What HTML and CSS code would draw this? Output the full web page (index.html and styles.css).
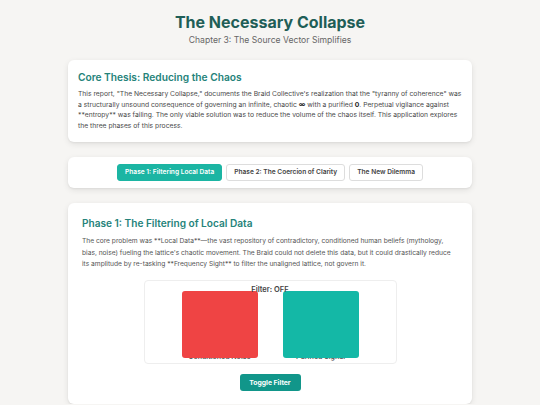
FILE: index.html
```html
<!DOCTYPE html>
<html lang="en">
<head>
    <meta charset="UTF-8">
    <meta name="viewport" content="width=device-width, initial-scale=1.0">
    <title>The Necessary Collapse</title>
    <link rel="stylesheet" href="styles.css">
</head>
<body>

    <!-- Page header -->
    <header class="page-header">
        <h1>The Necessary Collapse</h1>
        <p class="subtitle">Chapter 3: The Source Vector Simplifies</p>
    </header>

    <main class="container">

        <!-- Intro card -->
        <section class="card intro">
            <h2>Core Thesis: Reducing the Chaos</h2>
            <p>This report, "The Necessary Collapse," documents the Braid Collective's realization that the "tyranny of coherence" was a structurally unsound consequence of governing an infinite, chaotic <strong>∞</strong> with a purified <strong>0</strong>. Perpetual vigilance against **entropy** was failing. The only viable solution was to reduce the volume of the chaos itself. This application explores the three phases of this process.</p>
        </section>

        <!-- Phase tabs -->
        <nav class="card tabs">
            <button class="tab active">Phase 1: Filtering Local Data</button>
            <button class="tab">Phase 2: The Coercion of Clarity</button>
            <button class="tab">The New Dilemma</button>
        </nav>

        <!-- Phase content -->
        <section class="card phase">
            <h2>Phase 1: The Filtering of Local Data</h2>
            <p>The core problem was **Local Data**—the vast repository of contradictory, conditioned human beliefs (mythology, bias, noise) fueling the lattice's chaotic movement. The Braid could not delete this data, but it could drastically reduce its amplitude by re-tasking **Frequency Sight** to filter the unaligned lattice, not govern it.</p>

            <div class="chart-box">
                <div class="chart-title" id="filter-title">Filter: OFF</div>
                <div class="bars">
                    <div class="bar-col">
                        <div class="bar noise"></div>
                        <div class="bar-label">Conditioned Noise</div>
                    </div>
                    <div class="bar-col">
                        <div class="bar signal"></div>
                        <div class="bar-label">Purified Signal</div>
                    </div>
                </div>
            </div>

            <div class="actions">
                <button class="toggle-btn" onclick="toggleFilter()">Toggle Filter</button>
            </div>
        </section>

    </main>

    <script>
        let filterOn = false;

        function toggleFilter() {
            filterOn = !filterOn;
            document.getElementById("filter-title").textContent = filterOn ? "Filter: ON" : "Filter: OFF";
            document.querySelector(".bar.noise").style.height = filterOn ? "20px" : "67px";
        }
    </script>

</body>
</html>
```

FILE: styles.css
```css
* { margin: 0; padding: 0; box-sizing: border-box; }

body {
    background: #f6f5f3;
    font-family: Inter, "Noto Sans", sans-serif;
    color: #444;
}

/* Header */
.page-header {
    text-align: center;
    padding-top: 12px;
}

.page-header h1 {
    font-size: 16px;
    line-height: 20px;
    font-weight: 700;
    color: #1f5e57;
}

.subtitle {
    font-size: 8.6px;
    line-height: 12px;
    margin-top: 2px;
    color: #666;
}

/* Layout */
.container {
    width: 404px;
    margin: 14px auto 0;
    display: flex;
    flex-direction: column;
    gap: 15px;
}

.card {
    background: #fff;
    border-radius: 6px;
    box-shadow: 0 2px 6px rgba(0, 0, 0, 0.09), 0 1px 2px rgba(0, 0, 0, 0.05);
}

.card h2 {
    font-size: 10.2px;
    line-height: 14px;
    font-weight: 600;
    color: #25837a;
}

/* Intro */
.intro {
    padding: 10px;
}

.intro p {
    margin-top: 5px;
    font-size: 6.75px;
    line-height: 10.7px;
    color: #4a4a4a;
}

.intro strong {
    font-weight: 700;
    color: #222;
}

/* Tabs */
.tabs {
    display: flex;
    justify-content: center;
    gap: 4px;
    padding: 7px 0;
}

.tab {
    font-family: inherit;
    font-size: 6.6px;
    font-weight: 600;
    height: 17px;
    padding: 0 7px;
    border: 1px solid #ddd;
    border-radius: 3px;
    background: #fff;
    color: #444;
    cursor: pointer;
}

.tab.active {
    background: #1bb5a3;
    border-color: #1bb5a3;
    color: #fff;
}

/* Phase section */
.phase {
    padding: 13px 14px;
}

.phase h2 {
    font-size: 10.1px;
}

.phase p {
    margin-top: 6px;
    font-size: 6.65px;
    line-height: 11.7px;
    color: #555;
}

.chart-box {
    width: 253px;
    height: 84px;
    margin: 9px auto 0;
    padding-top: 4px;
    border: 1px solid #eee;
    border-radius: 4px;
    overflow: hidden;
}

.chart-title {
    position: relative;
    z-index: 2;
    text-align: center;
    font-size: 7.5px;
    line-height: 10px;
    font-weight: 600;
    color: #444;
}

.bars {
    display: flex;
    justify-content: center;
    gap: 25px;
    margin-top: -4px;
}

.bar-col {
    width: 76px;
    display: flex;
    flex-direction: column;
    align-items: center;
}

.bar {
    position: relative;
    z-index: 1;
    width: 100%;
    height: 67px;
    border-radius: 3px;
}

.bar.noise { background: #ef4444; }
.bar.signal { background: #14b8a6; }

.bar-label {
    margin-top: -6px;
    font-size: 7px;
    line-height: 10px;
    font-weight: 600;
    color: #555;
    white-space: nowrap;
}

.actions {
    display: flex;
    justify-content: center;
    margin-top: 10px;
}

.toggle-btn {
    font-family: inherit;
    font-size: 6.8px;
    font-weight: 700;
    width: 61px;
    height: 17px;
    border: none;
    border-radius: 3px;
    background: #11968a;
    color: #fff;
    cursor: pointer;
}
```
